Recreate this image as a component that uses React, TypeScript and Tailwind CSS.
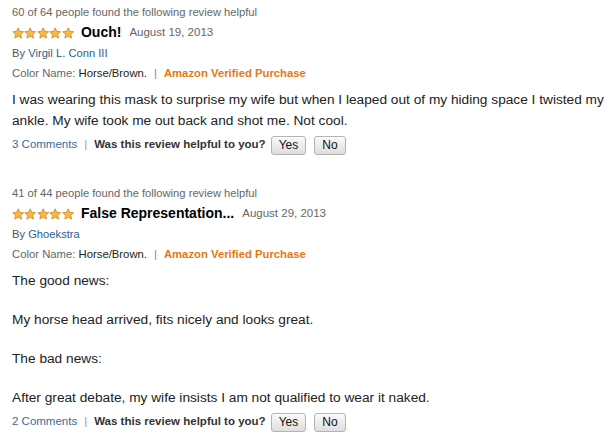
import React from "react";

type Review = {
  helpful: string;
  title: string;
  date: string;
  author: string;
  body: string[];
  comments: string;
};

const reviews: Review[] = [
  {
    helpful: "60 of 64 people found the following review helpful",
    title: "Ouch!",
    date: "August 19, 2013",
    author: "Virgil L. Conn III",
    body: [
      "I was wearing this mask to surprise my wife but when I leaped out of my hiding space I twisted my ankle. My wife took me out back and shot me. Not cool.",
    ],
    comments: "3 Comments",
  },
  {
    helpful: "41 of 44 people found the following review helpful",
    title: "False Representation...",
    date: "August 29, 2013",
    author: "Ghoekstra",
    body: [
      "The good news:",
      "My horse head arrived, fits nicely and looks great.",
      "The bad news:",
      "After great debate, my wife insists I am not qualified to wear it naked.",
    ],
    comments: "2 Comments",
  },
];

function Star() {
  return (
    <svg width="12.4" height="12" viewBox="0 0 24 23">
      <path
        d="M12 1.5l3.1 6.8 7.4.8-5.5 5 1.5 7.3L12 17.7l-6.5 3.7 1.5-7.3-5.5-5 7.4-.8z"
        fill="#f6b84c"
        stroke="#d38a1d"
        strokeWidth="1.6"
        strokeLinejoin="round"
      />
    </svg>
  );
}

function VoteButton({ label }: { label: string }) {
  return (
    <button className="h-[19px] px-[7px] rounded-[3px] border border-[#b3b3b3] bg-gradient-to-b from-[#fafafa] to-[#dedede] text-[12px] text-[#111] leading-none shadow-[inset_0_1px_0_#fff]">
      {label}
    </button>
  );
}

function ReviewBlock({ r }: { r: Review }) {
  return (
    <div className="flex flex-col">
      <div className="h-[20px] flex items-center text-[11.2px] text-[#666]">{r.helpful}</div>
      <div className="h-[21px] flex items-center gap-[7px]">
        <div className="flex">
          {[0, 1, 2, 3, 4].map((i) => (
            <Star key={i} />
          ))}
        </div>
        <span className="text-[14px] font-bold text-black">{r.title}</span>
        <span className="text-[11.5px] text-[#666] ml-[1px]">{r.date}</span>
      </div>
      <div className="h-[20px] flex items-center text-[11.2px] text-[#555]">
        By&nbsp;<span className="text-[#2f5e8c]">{r.author}</span>
      </div>
      <div className="h-[20px] flex items-center text-[11.3px] text-[#666]">
        Color Name:&nbsp;<span className="text-[#222]">Horse/Brown.</span>
        <span className="mx-[7px] text-[#888]">|</span>
        <span className="font-bold text-[#e47911]">Amazon Verified Purchase</span>
      </div>
      <div className="mt-[6px] flex flex-col gap-[18px] text-[13.7px] leading-[21px] text-[#222] pr-[6px]">
        {r.body.map((p, i) => (
          <p key={i}>{p}</p>
        ))}
      </div>
      <div className="mt-[3px] h-[22px] flex items-center text-[11.5px]">
        <span className="text-[#3b6a9c]">{r.comments}</span>
        <span className="mx-[7px] text-[#999]">|</span>
        <span className="font-bold text-[#333] mr-[5px]">Was this review helpful to you?</span>
        <div className="flex gap-[8px]">
          <VoteButton label="Yes" />
          <VoteButton label="No" />
        </div>
      </div>
    </div>
  );
}

export default function App() {
  return (
    <div
      className="w-[610px] h-[437px] bg-white pl-[12px] pt-[2px] flex flex-col gap-[27px] overflow-hidden"
      style={{ fontFamily: '"Liberation Sans", Arial, sans-serif' }}
    >
      {reviews.map((r, i) => (
        <ReviewBlock key={i} r={r} />
      ))}
    </div>
  );
}
